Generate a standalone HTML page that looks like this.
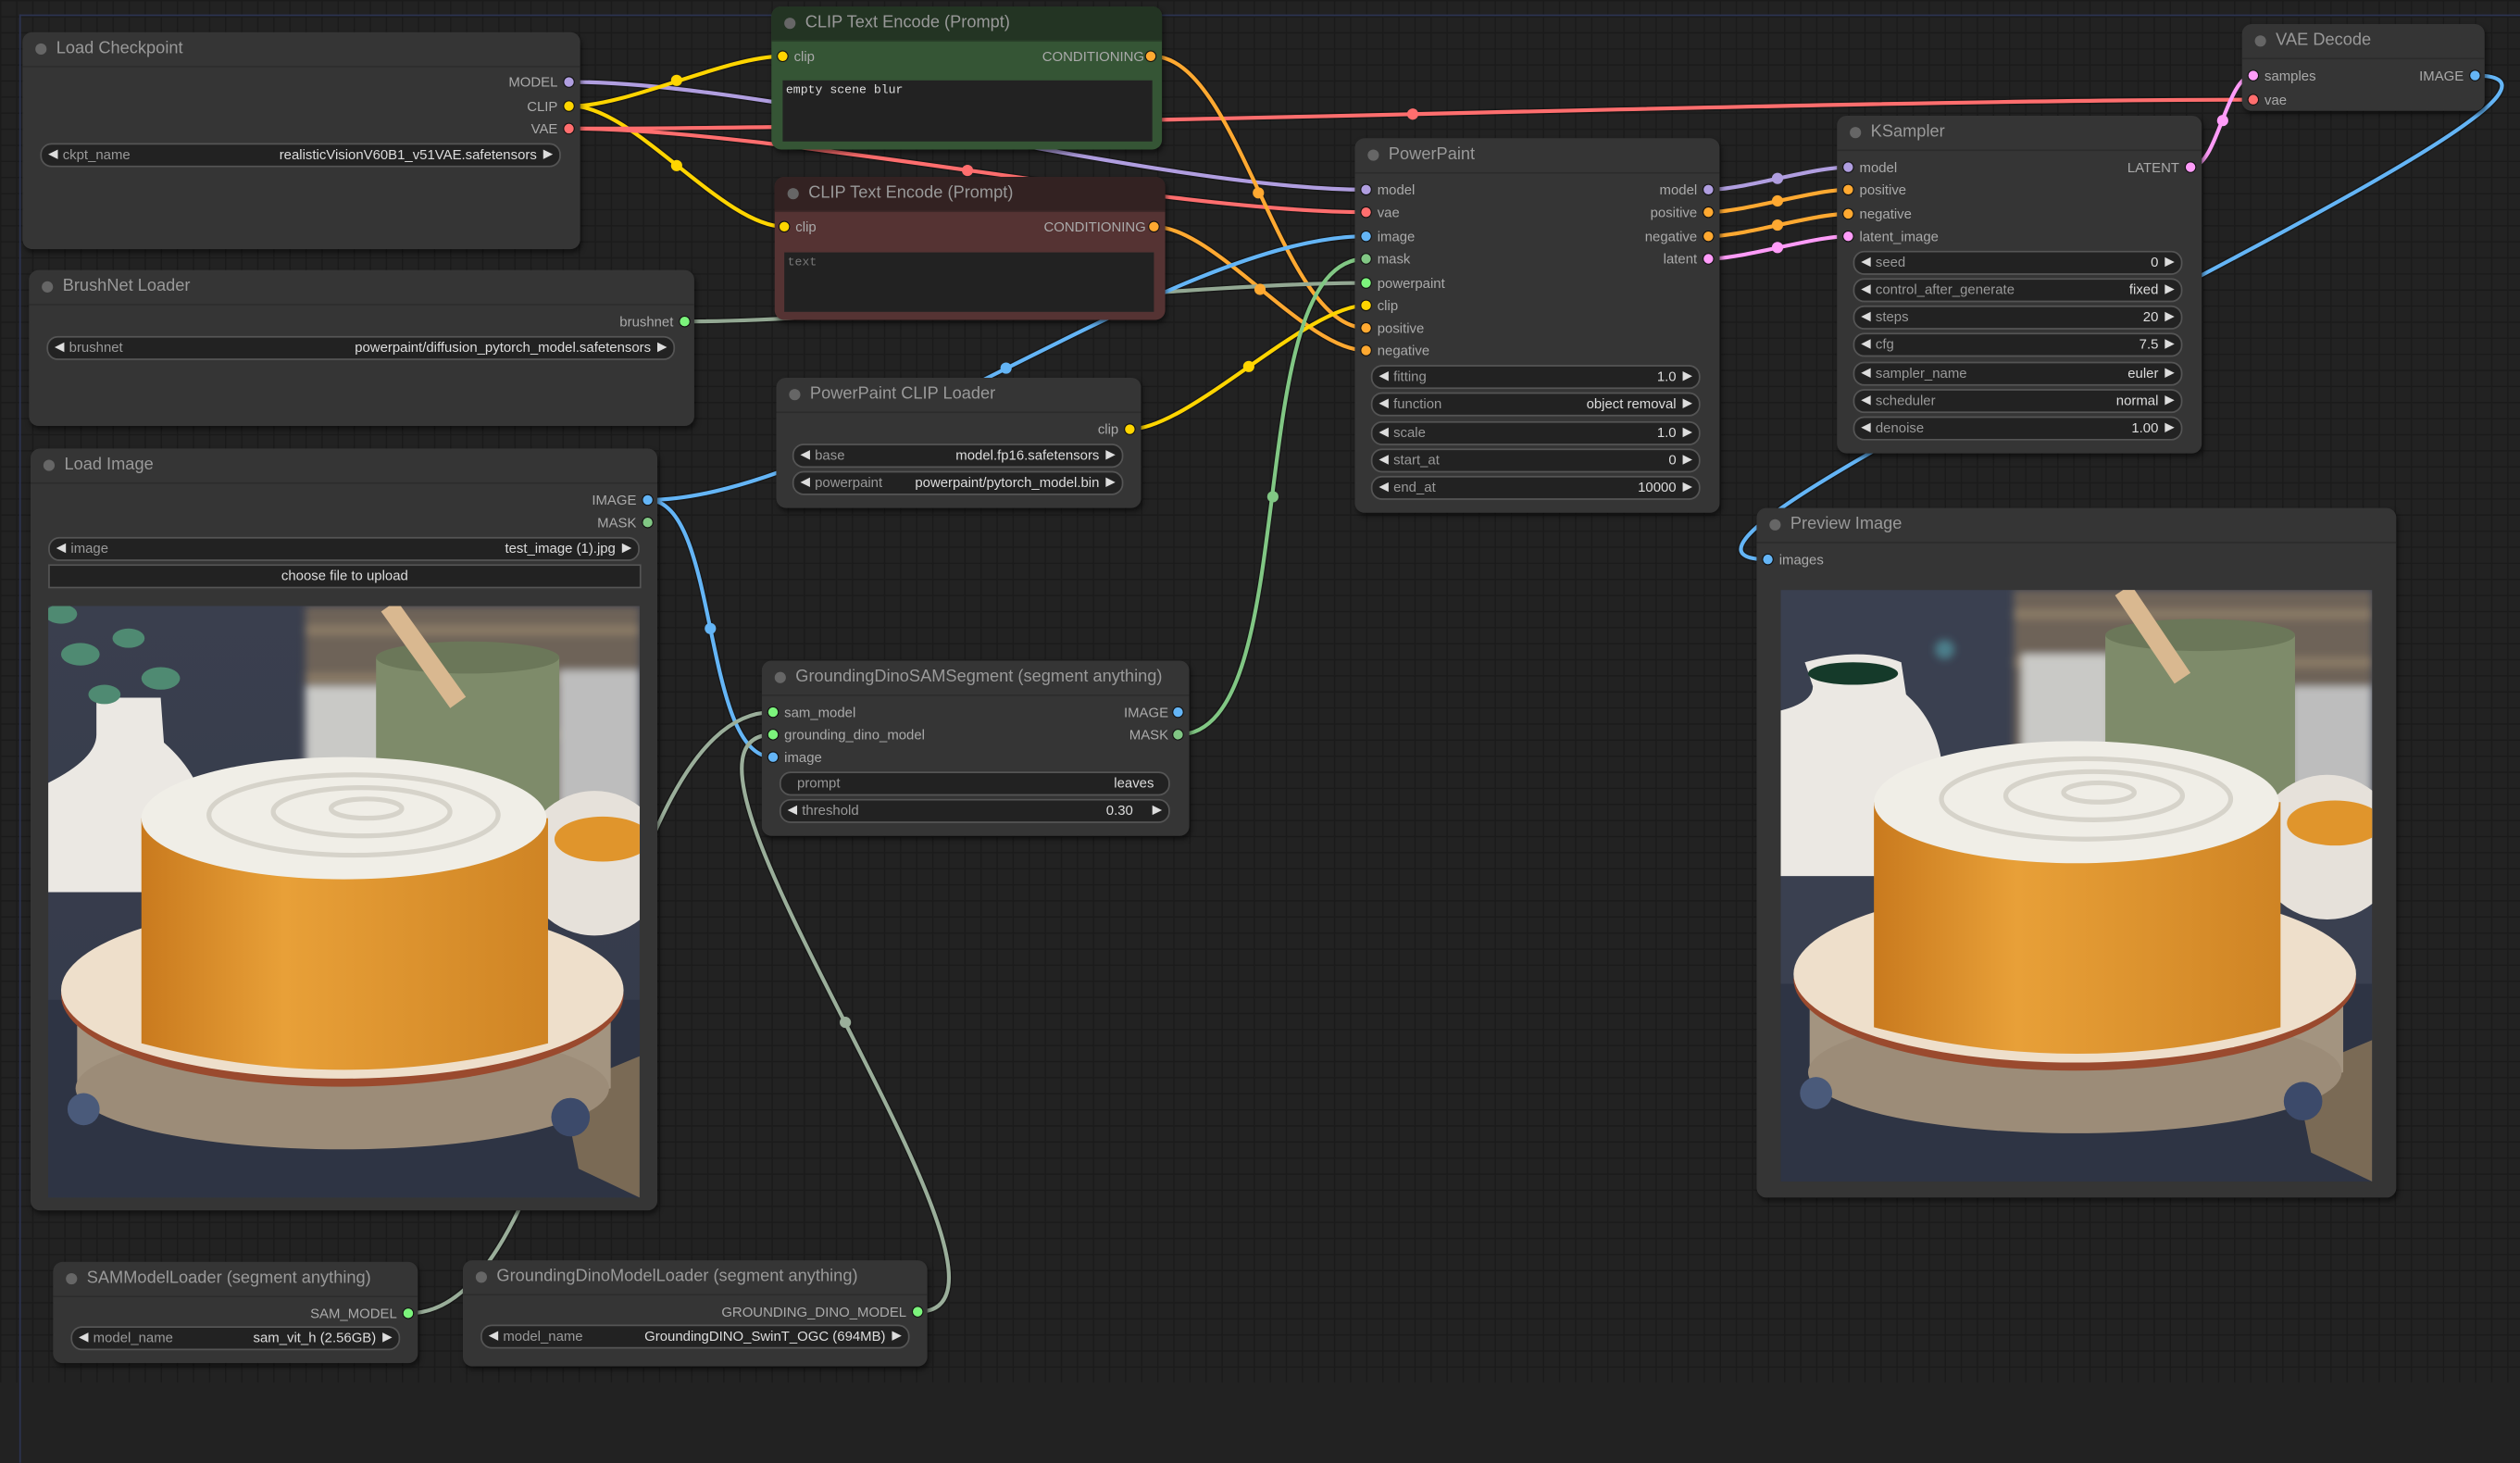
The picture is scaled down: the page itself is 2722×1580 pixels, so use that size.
<!DOCTYPE html>
<html><head><meta charset="utf-8"><style>
html,body{margin:0;padding:0;width:2722px;height:1493px;overflow:hidden;background:#222}
#c{position:absolute;left:0;top:0;width:1568px;height:860px;transform:scale(1.73597,1.73605);transform-origin:0 0;
background-color:#222;
background-image:linear-gradient(#1b1b1b 1px,transparent 1px),linear-gradient(90deg,#1b1b1b 1px,transparent 1px);
background-size:10px 10px;font-family:"Liberation Sans",sans-serif;}
.n{position:absolute;background:#353535;border-radius:6px;box-shadow:1px 2px 3px rgba(0,0,0,.5)}
.n .t{position:absolute;left:0;right:0;top:0;height:21px;border-bottom:1px solid #2c2c2c;border-radius:6px 6px 0 0}
.n .t i{position:absolute;left:8px;top:7px;width:7px;height:7px;border-radius:50%;background:#666}
.n .t span{position:absolute;left:21px;top:4px;font-size:10.5px;color:#999;white-space:nowrap}
.d{position:absolute;width:6px;height:6px;border-radius:50%;margin:-3px 0 0 -3px;box-shadow:0 0 0 .6px #111}
.l{position:absolute;font-size:8.6px;color:#aaa;white-space:nowrap;line-height:10px;margin-top:-5px}
.r{text-align:right}
.w{position:absolute;height:13px;border:1px solid #555;border-radius:7px;background:#222;font-size:8.6px;line-height:13px;color:#999;box-sizing:content-box}
.w .k{position:absolute;left:13px;top:0}
.w .v{position:absolute;right:14px;top:0;color:#ddd;white-space:nowrap}
.w .a{position:absolute;left:4px;top:3px;width:0;height:0;border-top:3.5px solid transparent;border-bottom:3.5px solid transparent;border-right:6px solid #ddd}
.w .b{position:absolute;right:4px;top:3px;width:0;height:0;border-top:3.5px solid transparent;border-bottom:3.5px solid transparent;border-left:6px solid #ddd}
.ta{position:absolute;background:#222;font-family:"Liberation Mono",monospace;font-size:7.6px;color:#ddd;padding:3px 2px;box-sizing:border-box}
</style></head><body><div id="c">
<div style="position:absolute;left:12px;top:9px;width:1600px;height:900px;border-left:1px solid #2c3350;border-top:1px solid #2c3350"></div>
<svg width="1568" height="860" style="position:absolute;left:0;top:0" fill="none" stroke-linecap="round">
<g stroke="#111" stroke-width="4" opacity=".55">
<path d="M356,51 C481,51 725,118 850,118"/><path d="M356,66 C391,66 452,35 487,35"/><path d="M356,66 C394,66 450,141 488,141"/>
<path d="M356,80 C480,80 726,132 850,132"/><path d="M356,80 C618,80 1140,62 1402,62"/><path d="M717,35 C771,35 796,204 850,204"/>
<path d="M718,141 C756,141 812,218 850,218"/><path d="M426,200 C532,200 744,176 850,176"/><path d="M403,311 C523,311 730,147 850,147"/>
<path d="M403,311 C448,311 436,471 481,471"/><path d="M703,267 C740,267 813,190 850,190"/><path d="M733,457 C813,457 770,161 850,161"/>
<path d="M1540,47 C1673,47 967,348 1100,348"/><path d="M254,817 C362,817 373,443 481,443"/><path d="M571,816 C664,816 388,457 481,457"/>
</g>
<g stroke-width="2.4">
<path stroke="#b09ee0" d="M356,51 C481,51 725,118 850,118"/>
<path stroke="#ffd500" d="M356,66 C391,66 452,35 487,35"/>
<path stroke="#ffd500" d="M356,66 C394,66 450,141 488,141"/>
<path stroke="#ff6e6e" d="M356,80 C480,80 726,132 850,132"/>
<path stroke="#ff6e6e" d="M356,80 C618,80 1140,62 1402,62"/>
<path stroke="#ffa931" d="M717,35 C771,35 796,204 850,204"/>
<path stroke="#ffa931" d="M718,141 C756,141 812,218 850,218"/>
<path stroke="#93a893" d="M426,200 C532,200 744,176 850,176"/>
<path stroke="#64b5f6" d="M403,311 C523,311 730,147 850,147"/>
<path stroke="#64b5f6" d="M403,311 C448,311 436,471 481,471"/>
<path stroke="#ffd500" d="M703,267 C740,267 813,190 850,190"/>
<path stroke="#81c784" d="M733,457 C813,457 770,161 850,161"/>
<path stroke="#b09ee0" d="M1063,118 C1085,118 1128,104 1150,104"/>
<path stroke="#ffa931" d="M1063,132 C1085,132 1128,118 1150,118"/>
<path stroke="#ffa931" d="M1063,147 C1085,147 1128,133 1150,133"/>
<path stroke="#ff9cf9" d="M1063,161 C1085,161 1128,147 1150,147"/>
<path stroke="#ff9cf9" d="M1363,104 C1380,104 1385,47 1402,47"/>
<path stroke="#64b5f6" d="M1540,47 C1673,47 967,348 1100,348"/>
<path stroke="#9aae9a" d="M254,817 C362,817 373,443 481,443"/>
<path stroke="#9aae9a" d="M571,816 C664,816 388,457 481,457"/>
</g>
<g>
<circle cx="421" cy="50" r="3.5" fill="#ffd500"/><circle cx="421" cy="103" r="3.5" fill="#ffd500"/>
<circle cx="602" cy="106" r="3.5" fill="#ff6e6e"/><circle cx="879" cy="71" r="3.5" fill="#ff6e6e"/>
<circle cx="783" cy="120" r="3.5" fill="#ffa931"/><circle cx="784" cy="180" r="3.5" fill="#ffa931"/>
<circle cx="626" cy="229" r="3.5" fill="#64b5f6"/><circle cx="777" cy="228" r="3.5" fill="#ffd500"/>
<circle cx="792" cy="309" r="3.5" fill="#81c784"/><circle cx="442" cy="391" r="3.5" fill="#64b5f6"/>
<circle cx="526" cy="636" r="3.5" fill="#9aae9a"/>
<circle cx="1106" cy="111" r="3.5" fill="#b09ee0"/><circle cx="1106" cy="125" r="3.5" fill="#ffa931"/>
<circle cx="1106" cy="140" r="3.5" fill="#ffa931"/><circle cx="1106" cy="154" r="3.5" fill="#ff9cf9"/>
<circle cx="1383" cy="75" r="3.5" fill="#ff9cf9"/>
</g>
</svg>

<div class="n" style="left:14px;top:20px;width:347px;height:135px"><div class="t"><i></i><span>Load Checkpoint</span></div></div>
<span class="l r" style="right:1221px;top:51px">MODEL</span><i class="d" style="left:354px;top:51px;background:#b09ee0"></i>
<span class="l r" style="right:1221px;top:66px">CLIP</span><i class="d" style="left:354px;top:66px;background:#ffd500"></i>
<span class="l r" style="right:1221px;top:80px">VAE</span><i class="d" style="left:354px;top:80px;background:#ff6e6e"></i>
<div class="w" style="left:25px;top:89px;width:322px"><i class="a"></i><span class="k">ckpt_name</span><span class="v">realisticVisionV60B1_v51VAE.safetensors</span><i class="b"></i></div>

<div class="n" style="left:480px;top:4px;width:243px;height:89px;background:#355535"><div class="t" style="background:#233423;border-bottom-color:#2a3f2a"><i></i><span>CLIP Text Encode (Prompt)</span></div></div>
<i class="d" style="left:487px;top:35px;background:#ffd500"></i><span class="l" style="left:494px;top:35px">clip</span>
<span class="l r" style="right:856px;top:35px">CONDITIONING</span><i class="d" style="left:716px;top:35px;background:#ffa931"></i>
<div class="ta" style="left:487px;top:50px;width:230px;height:38px">empty scene blur</div>

<div class="n" style="left:482px;top:110px;width:243px;height:89px;background:#553333"><div class="t" style="background:#332222;border-bottom-color:#3d2828"><i></i><span>CLIP Text Encode (Prompt)</span></div></div>
<i class="d" style="left:488px;top:141px;background:#ffd500"></i><span class="l" style="left:495px;top:141px">clip</span>
<span class="l r" style="right:855px;top:141px">CONDITIONING</span><i class="d" style="left:718px;top:141px;background:#ffa931"></i>
<div class="ta" style="left:488px;top:157px;width:230px;height:37px;color:#777">text</div>

<div class="n" style="left:18px;top:168px;width:414px;height:97px"><div class="t"><i></i><span>BrushNet Loader</span></div></div>
<span class="l r" style="right:1149px;top:200px">brushnet</span><i class="d" style="left:426px;top:200px;background:#7cf47c"></i>
<div class="w" style="left:29px;top:209px;width:389px"><i class="a"></i><span class="k">brushnet</span><span class="v">powerpaint/diffusion_pytorch_model.safetensors</span><i class="b"></i></div>

<div class="n" style="left:19px;top:279px;width:390px;height:474px"><div class="t"><i></i><span>Load Image</span></div></div>
<span class="l r" style="right:1172px;top:311px">IMAGE</span><i class="d" style="left:403px;top:311px;background:#64b5f6"></i>
<span class="l r" style="right:1172px;top:325px">MASK</span><i class="d" style="left:403px;top:325px;background:#81c784"></i>
<div class="w" style="left:30px;top:334px;width:366px"><i class="a"></i><span class="k">image</span><span class="v">test_image (1).jpg</span><i class="b"></i></div>
<div style="position:absolute;left:30px;top:351px;width:367px;height:13px;background:#222;border:1px solid #555;font-size:8.6px;color:#ddd;text-align:center;line-height:13px">choose file to upload</div>

<div class="n" style="left:483px;top:235px;width:227px;height:81px"><div class="t"><i></i><span>PowerPaint CLIP Loader</span></div></div>
<span class="l r" style="right:872px;top:267px">clip</span><i class="d" style="left:703px;top:267px;background:#ffd500"></i>
<div class="w" style="left:493px;top:276px;width:204px"><i class="a"></i><span class="k">base</span><span class="v">model.fp16.safetensors</span><i class="b"></i></div>
<div class="w" style="left:493px;top:293px;width:204px"><i class="a"></i><span class="k">powerpaint</span><span class="v">powerpaint/pytorch_model.bin</span><i class="b"></i></div>

<div class="n" style="left:474px;top:411px;width:266px;height:109px"><div class="t"><i></i><span>GroundingDinoSAMSegment (segment anything)</span></div></div>
<i class="d" style="left:481px;top:443px;background:#7cf47c"></i><span class="l" style="left:488px;top:443px">sam_model</span>
<i class="d" style="left:481px;top:457px;background:#7cf47c"></i><span class="l" style="left:488px;top:457px">grounding_dino_model</span>
<i class="d" style="left:481px;top:471px;background:#64b5f6"></i><span class="l" style="left:488px;top:471px">image</span>
<span class="l r" style="right:841px;top:443px">IMAGE</span><i class="d" style="left:733px;top:443px;background:#64b5f6"></i>
<span class="l r" style="right:841px;top:457px">MASK</span><i class="d" style="left:733px;top:457px;background:#81c784"></i>
<div class="w" style="left:485px;top:480px;width:241px"><span class="k" style="left:10px">prompt</span><span class="v" style="right:9px">leaves</span></div>
<div class="w" style="left:485px;top:497px;width:241px"><i class="a"></i><span class="k">threshold</span><span class="v" style="right:22px">0.30</span><i class="b"></i></div>

<div class="n" style="left:843px;top:86px;width:227px;height:233px"><div class="t"><i></i><span>PowerPaint</span></div></div>
<i class="d" style="left:850px;top:118px;background:#b09ee0"></i><span class="l" style="left:857px;top:118px">model</span>
<i class="d" style="left:850px;top:132px;background:#ff6e6e"></i><span class="l" style="left:857px;top:132px">vae</span>
<i class="d" style="left:850px;top:147px;background:#64b5f6"></i><span class="l" style="left:857px;top:147px">image</span>
<i class="d" style="left:850px;top:161px;background:#81c784"></i><span class="l" style="left:857px;top:161px">mask</span>
<i class="d" style="left:850px;top:176px;background:#7cf47c"></i><span class="l" style="left:857px;top:176px">powerpaint</span>
<i class="d" style="left:850px;top:190px;background:#ffd500"></i><span class="l" style="left:857px;top:190px">clip</span>
<i class="d" style="left:850px;top:204px;background:#ffa931"></i><span class="l" style="left:857px;top:204px">positive</span>
<i class="d" style="left:850px;top:218px;background:#ffa931"></i><span class="l" style="left:857px;top:218px">negative</span>
<span class="l r" style="right:512px;top:118px">model</span><i class="d" style="left:1063px;top:118px;background:#b09ee0"></i>
<span class="l r" style="right:512px;top:132px">positive</span><i class="d" style="left:1063px;top:132px;background:#ffa931"></i>
<span class="l r" style="right:512px;top:147px">negative</span><i class="d" style="left:1063px;top:147px;background:#ffa931"></i>
<span class="l r" style="right:512px;top:161px">latent</span><i class="d" style="left:1063px;top:161px;background:#ff9cf9"></i>
<div class="w" style="left:853px;top:227px;width:203px"><i class="a"></i><span class="k">fitting</span><span class="v">1.0</span><i class="b"></i></div>
<div class="w" style="left:853px;top:244px;width:203px"><i class="a"></i><span class="k">function</span><span class="v">object removal</span><i class="b"></i></div>
<div class="w" style="left:853px;top:262px;width:203px"><i class="a"></i><span class="k">scale</span><span class="v">1.0</span><i class="b"></i></div>
<div class="w" style="left:853px;top:279px;width:203px"><i class="a"></i><span class="k">start_at</span><span class="v">0</span><i class="b"></i></div>
<div class="w" style="left:853px;top:296px;width:203px"><i class="a"></i><span class="k">end_at</span><span class="v">10000</span><i class="b"></i></div>

<div class="n" style="left:1143px;top:72px;width:227px;height:210px"><div class="t"><i></i><span>KSampler</span></div></div>
<i class="d" style="left:1150px;top:104px;background:#b09ee0"></i><span class="l" style="left:1157px;top:104px">model</span>
<i class="d" style="left:1150px;top:118px;background:#ffa931"></i><span class="l" style="left:1157px;top:118px">positive</span>
<i class="d" style="left:1150px;top:133px;background:#ffa931"></i><span class="l" style="left:1157px;top:133px">negative</span>
<i class="d" style="left:1150px;top:147px;background:#ff9cf9"></i><span class="l" style="left:1157px;top:147px">latent_image</span>
<span class="l r" style="right:212px;top:104px">LATENT</span><i class="d" style="left:1363px;top:104px;background:#ff9cf9"></i>
<div class="w" style="left:1153px;top:156px;width:203px"><i class="a"></i><span class="k">seed</span><span class="v">0</span><i class="b"></i></div>
<div class="w" style="left:1153px;top:173px;width:203px"><i class="a"></i><span class="k">control_after_generate</span><span class="v">fixed</span><i class="b"></i></div>
<div class="w" style="left:1153px;top:190px;width:203px"><i class="a"></i><span class="k">steps</span><span class="v">20</span><i class="b"></i></div>
<div class="w" style="left:1153px;top:207px;width:203px"><i class="a"></i><span class="k">cfg</span><span class="v">7.5</span><i class="b"></i></div>
<div class="w" style="left:1153px;top:225px;width:203px"><i class="a"></i><span class="k">sampler_name</span><span class="v">euler</span><i class="b"></i></div>
<div class="w" style="left:1153px;top:242px;width:203px"><i class="a"></i><span class="k">scheduler</span><span class="v">normal</span><i class="b"></i></div>
<div class="w" style="left:1153px;top:259px;width:203px"><i class="a"></i><span class="k">denoise</span><span class="v">1.00</span><i class="b"></i></div>

<div class="n" style="left:1395px;top:15px;width:151px;height:54px"><div class="t"><i></i><span>VAE Decode</span></div></div>
<i class="d" style="left:1402px;top:47px;background:#ff9cf9"></i><span class="l" style="left:1409px;top:47px">samples</span>
<i class="d" style="left:1402px;top:62px;background:#ff6e6e"></i><span class="l" style="left:1409px;top:62px">vae</span>
<span class="l r" style="right:35px;top:47px">IMAGE</span><i class="d" style="left:1540px;top:47px;background:#64b5f6"></i>

<div class="n" style="left:1093px;top:316px;width:398px;height:429px"><div class="t"><i></i><span>Preview Image</span></div></div>
<i class="d" style="left:1100px;top:348px;background:#64b5f6"></i><span class="l" style="left:1107px;top:348px">images</span>

<div class="n" style="left:33px;top:785px;width:227px;height:63px"><div class="t"><i></i><span>SAMModelLoader (segment anything)</span></div></div>
<span class="l r" style="right:1321px;top:817px">SAM_MODEL</span><i class="d" style="left:254px;top:817px;background:#7cf47c"></i>
<div class="w" style="left:44px;top:825px;width:203px"><i class="a"></i><span class="k">model_name</span><span class="v">sam_vit_h (2.56GB)</span><i class="b"></i></div>

<div class="n" style="left:288px;top:784px;width:289px;height:66px"><div class="t"><i></i><span>GroundingDinoModelLoader (segment anything)</span></div></div>
<span class="l r" style="right:1004px;top:816px">GROUNDING_DINO_MODEL</span><i class="d" style="left:571px;top:816px;background:#7cf47c"></i>
<div class="w" style="left:299px;top:824px;width:265px"><i class="a"></i><span class="k">model_name</span><span class="v">GroundingDINO_SwinT_OGC (694MB)</span><i class="b"></i></div>

<svg style="position:absolute;left:30px;top:377px" width="368" height="368" viewBox="0 0 368 368">
<defs><filter id="bl" x="-10%" y="-10%" width="120%" height="120%"><feGaussianBlur stdDeviation="2.5"/></filter>
<linearGradient id="cb" x1="0" x2="1"><stop offset="0" stop-color="#c97a1e"/><stop offset=".35" stop-color="#e8a038"/><stop offset="1" stop-color="#cf8424"/></linearGradient>
<linearGradient id="bg" x1="0" y1="0" x2="0" y2="1"><stop offset="0" stop-color="#3a3f4e"/><stop offset="1" stop-color="#343a4a"/></linearGradient></defs>
<rect width="368" height="368" fill="url(#bg)"/>
<g filter="url(#bl)">
<rect x="160" y="0" width="208" height="130" fill="#6e6458"/>
<g stroke="#8a7a66" stroke-width="6"><line x1="160" y1="15" x2="368" y2="15"/><line x1="160" y1="45" x2="368" y2="45"/><line x1="160" y1="80" x2="368" y2="80"/></g>
<rect x="160" y="50" width="50" height="80" fill="#c9c9c6"/>
<rect x="318" y="40" width="50" height="90" fill="#bdbdbd"/>
</g>
<rect x="204" y="32" width="114" height="102" fill="#7e8b6a"/><ellipse cx="261" cy="32" rx="57" ry="10" fill="#6b7759"/>
<line x1="212" y1="0" x2="255" y2="60" stroke="#d9b890" stroke-width="12"/>
<path d="M30,57 L70,57 L72,85 Q101,110 101,150 Q101,178 60,178 L0,178 L0,110 Q30,95 30,80 Z" fill="#ebe8e3"/>
<g fill="#4f8a72"><ellipse cx="20" cy="30" rx="12" ry="7"/><ellipse cx="50" cy="20" rx="10" ry="6"/><ellipse cx="70" cy="45" rx="12" ry="7"/><ellipse cx="35" cy="55" rx="10" ry="6"/><ellipse cx="8" cy="5" rx="10" ry="6"/></g>
<rect x="0" y="245" width="368" height="123" fill="#2e3444"/>
<ellipse cx="340" cy="160" rx="45" ry="45" fill="#e6e1da"/><ellipse cx="345" cy="145" rx="30" ry="14" fill="#e0952c"/>
<path d="M320,300 L368,280 L368,368 L330,350 Z" fill="#7a6a55"/>
<path d="M18,248 L18,300 Q183,360 350,300 L350,248 Z" fill="#a39480"/>
<ellipse cx="183" cy="300" rx="166" ry="38" fill="#9c8c78"/>
<ellipse cx="183" cy="242" rx="175" ry="57" fill="#9a4a2e"/>
<ellipse cx="183" cy="239" rx="175" ry="55" fill="#eedfcb"/>
<path d="M58,132 L58,272 Q184,305 311,272 L311,132 Z" fill="url(#cb)"/>
<ellipse cx="184" cy="132" rx="126" ry="38" fill="#f0eee7"/>
<g fill="none" stroke="#d6d3ca" stroke-width="3"><ellipse cx="190" cy="130" rx="90" ry="25"/><ellipse cx="195" cy="128" rx="55" ry="15"/><ellipse cx="198" cy="126" rx="22" ry="6"/></g>
<circle cx="22" cy="313" r="10" fill="#4a5a7a"/><circle cx="325" cy="318" r="12" fill="#3c4a6a"/>
</svg>
<svg style="position:absolute;left:1108px;top:367px" width="368" height="368" viewBox="0 0 368 368">
<defs><filter id="bl2" x="-10%" y="-10%" width="120%" height="120%"><feGaussianBlur stdDeviation="2.5"/></filter>
<linearGradient id="cb2" x1="0" x2="1"><stop offset="0" stop-color="#c97a1e"/><stop offset=".35" stop-color="#e8a038"/><stop offset="1" stop-color="#cf8424"/></linearGradient></defs>
<rect width="368" height="368" fill="#3a4050"/>
<g filter="url(#bl2)">
<rect x="145" y="0" width="223" height="125" fill="#6e6458"/>
<g stroke="#8a7a66" stroke-width="6"><line x1="145" y1="15" x2="368" y2="15"/><line x1="145" y1="45" x2="368" y2="45"/></g>
<rect x="150" y="40" width="55" height="90" fill="#c9c9c6"/>
<rect x="318" y="60" width="50" height="70" fill="#bdbdbd"/>
<circle cx="102" cy="37" r="6" fill="#4c7e8a"/>
</g>
<rect x="202" y="28" width="118" height="106" fill="#7e8b6a"/><ellipse cx="261" cy="28" rx="59" ry="10" fill="#6b7759"/>
<line x1="213" y1="0" x2="250" y2="55" stroke="#d9b890" stroke-width="12"/>
<path d="M15,45 Q50,35 75,45 L78,65 Q101,85 101,120 Q101,178 60,178 L0,178 L0,75 Q20,70 20,60 Z" fill="#ebe8e3"/>
<ellipse cx="45" cy="52" rx="28" ry="7" fill="#153a2a"/>
<rect x="0" y="245" width="368" height="123" fill="#2e3444"/>
<ellipse cx="340" cy="160" rx="45" ry="45" fill="#e6e1da"/><ellipse cx="345" cy="145" rx="30" ry="14" fill="#e0952c"/>
<path d="M320,300 L368,280 L368,368 L330,350 Z" fill="#7a6a55"/>
<path d="M18,248 L18,300 Q183,360 350,300 L350,248 Z" fill="#a39480"/>
<ellipse cx="183" cy="300" rx="166" ry="38" fill="#9c8c78"/>
<ellipse cx="183" cy="242" rx="175" ry="57" fill="#9a4a2e"/>
<ellipse cx="183" cy="239" rx="175" ry="55" fill="#eedfcb"/>
<path d="M58,132 L58,272 Q184,305 311,272 L311,132 Z" fill="url(#cb2)"/>
<ellipse cx="184" cy="132" rx="126" ry="38" fill="#f0eee7"/>
<g fill="none" stroke="#d6d3ca" stroke-width="3"><ellipse cx="190" cy="130" rx="90" ry="25"/><ellipse cx="195" cy="128" rx="55" ry="15"/><ellipse cx="198" cy="126" rx="22" ry="6"/></g>
<circle cx="22" cy="313" r="10" fill="#4a5a7a"/><circle cx="325" cy="318" r="12" fill="#3c4a6a"/>
</svg>
</div></body></html>
